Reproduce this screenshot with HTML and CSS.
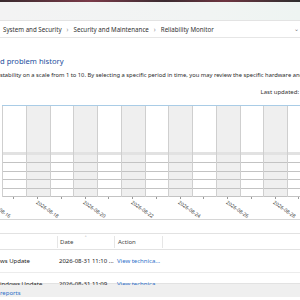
FILE: index.html
```html
<!DOCTYPE html>
<html lang="en">
<head>
  <meta charset="UTF-8" />
  <title>Reliability Monitor</title>
  <link rel="stylesheet" href="styles.css">
</head>
<body>

  <div class="titlebar"></div>
  <div class="toolbar"></div>

  <nav class="crumbs">
    <span>System and Security</span>
    <span class="sep">&#8250;</span>
    <span>Security and Maintenance</span>
    <span class="sep">&#8250;</span>
    <span>Reliability Monitor</span>
    <span class="drop">&#8964;</span>
  </nav>

  <div class="content">
    <h1>d problem history</h1>
    <p class="intro">stability on a scale from 1 to 10. By selecting a specific period in time, you may review the specific hardware and software problems</p>
    <div class="updated">Last updated:</div>

    <div class="chart">
      <div class="col"><div class="graph"></div><div class="band"></div><div class="cell"></div><div class="cell"></div><div class="cell"></div><div class="cell"></div><div class="cell"></div></div>
      <div class="col shade"><div class="graph"></div><div class="band"></div><div class="cell"></div><div class="cell"></div><div class="cell"></div><div class="cell"></div><div class="cell"></div></div>
      <div class="col"><div class="graph"></div><div class="band"></div><div class="cell"></div><div class="cell"></div><div class="cell"></div><div class="cell"></div><div class="cell"></div></div>
      <div class="col shade"><div class="graph"></div><div class="band"></div><div class="cell"></div><div class="cell"></div><div class="cell"></div><div class="cell"></div><div class="cell"></div></div>
      <div class="col"><div class="graph"></div><div class="band"></div><div class="cell"></div><div class="cell"></div><div class="cell"></div><div class="cell"></div><div class="cell"></div></div>
      <div class="col shade"><div class="graph"></div><div class="band"></div><div class="cell"></div><div class="cell"></div><div class="cell"></div><div class="cell"></div><div class="cell"></div></div>
      <div class="col"><div class="graph"></div><div class="band"></div><div class="cell"></div><div class="cell"></div><div class="cell"></div><div class="cell"></div><div class="cell"></div></div>
      <div class="col shade"><div class="graph"></div><div class="band"></div><div class="cell"></div><div class="cell"></div><div class="cell"></div><div class="cell"></div><div class="cell"></div></div>
      <div class="col"><div class="graph"></div><div class="band"></div><div class="cell"></div><div class="cell"></div><div class="cell"></div><div class="cell"></div><div class="cell"></div></div>
      <div class="col shade"><div class="graph"></div><div class="band"></div><div class="cell"></div><div class="cell"></div><div class="cell"></div><div class="cell"></div><div class="cell"></div></div>
      <div class="col"><div class="graph"></div><div class="band"></div><div class="cell"></div><div class="cell"></div><div class="cell"></div><div class="cell"></div><div class="cell"></div></div>
      <div class="col shade"><div class="graph"></div><div class="band"></div><div class="cell"></div><div class="cell"></div><div class="cell"></div><div class="cell"></div><div class="cell"></div></div>
      <div class="col"><div class="graph"></div><div class="band"></div><div class="cell"></div><div class="cell"></div><div class="cell"></div><div class="cell"></div><div class="cell"></div></div>
    </div>

    <div class="axis">
      <div class="tick"><span class="date">2026-08-16</span></div>
      <div class="tick"></div>
      <div class="tick"><span class="date">2026-08-18</span></div>
      <div class="tick"></div>
      <div class="tick"><span class="date">2026-08-20</span></div>
      <div class="tick"></div>
      <div class="tick"><span class="date">2026-08-22</span></div>
      <div class="tick"></div>
      <div class="tick"><span class="date">2026-08-24</span></div>
      <div class="tick"></div>
      <div class="tick"><span class="date">2026-08-26</span></div>
      <div class="tick"></div>
      <div class="tick"><span class="date">2026-08-28</span></div>
      <div class="tick"></div>
    </div>

    <div class="details">
      <div class="row head">
        <div class="c1"></div>
        <div class="c2">Date<span class="sort">&#708;</span></div>
        <div class="c3">Action</div>
        <div class="c4"></div>
      </div>
      <div class="row">
        <div class="c1">ws Update</div>
        <div class="c2">2026-08-31 11:10 ...</div>
        <div class="c3"><a href="#">View technica...</a></div>
        <div class="c4"></div>
      </div>
      <div class="row">
        <div class="c1">indows Update</div>
        <div class="c2">2026-08-31 11:09 ...</div>
        <div class="c3"><a href="#">View technica...</a></div>
        <div class="c4"></div>
      </div>
    </div>
  </div>

  <div class="footer"><a href="#">reports</a></div>

</body>
</html>
```

FILE: styles.css
```css
* { box-sizing: border-box; }
html, body {
  width: 300px;
  height: 300px;
  overflow: hidden;
}
body {
  margin: 0;
  font-family: "Noto Sans", "Open Sans", sans-serif;
  font-size: 6px;
  color: #222;
  background: #fff;
}
a { color: #2a6fc9; text-decoration: none; }

.titlebar {
  height: 2px;
  background: linear-gradient(90deg, #3a2a2e, #7a3a48 30%, #3b2b30 55%, #6d3440 75%, #2e2e2e);
}
.toolbar {
  height: 18px;
  background: linear-gradient(90deg, #f3f3f3, #f1f4f3 70%, #eef4f2);
}
.crumbs {
  height: 18px;
  display: flex;
  align-items: center;
  gap: 4px;
  padding-left: 3px;
  font-size: 6.2px;
  border-top: 1px solid #e3e3e3;
  border-bottom: 1px solid #e6e6e6;
  color: #333;
  white-space: nowrap;
}
.crumbs .sep { color: #888; padding: 0 1px; }
.crumbs .drop { margin-left: auto; margin-right: 1px; color: #777; font-size: 6px; line-height: 4px; }

.content { padding-top: 18px; }
h1 {
  margin: 0;
  font-size: 7.6px;
  line-height: 10px;
  font-weight: 400;
  color: #1d4f9e;
}
.intro {
  margin: 5px 0 0;
  font-size: 5.8px;
  line-height: 8px;
  white-space: nowrap;
  color: #2a2a2a;
}
.updated {
  margin-top: 9px;
  line-height: 8px;
  text-align: right;
  padding-right: 1px;
  color: #333;
}

/* ===== GRAFICO ===== */
.chart {
  display: flex;
  margin-top: 9px;
  margin-left: 2px;
  border-top: 1px solid #a9cce6;
  height: 92px;
}
.col {
  flex: 0 0 23.75px;
  display: flex;
  flex-direction: column;
  border-left: 1px solid #cfcfcf;
}
.col.shade { background: #efefef; }
.graph { height: 46px; }
.band { height: 3px; background: #e2e2e2; }
.cell {
  height: 8.4px;
  border-bottom: 1px solid #c3c3c3;
}

.axis {
  display: flex;
  height: 23px;
  margin-left: -21.75px;
  border-bottom: 1px solid #d6d6d6;
}
.tick {
  flex: 0 0 23.75px;
  min-width: 0;
  background: linear-gradient(#9a9a9a, #9a9a9a) no-repeat center top / 1px 2px;
}
.date {
  display: block;
  width: 0;
  margin: 3px 0 0 11.9px;
  font-size: 5px;
  line-height: 5px;
  color: #444;
  white-space: nowrap;
  transform: rotate(35deg);
  transform-origin: 0 0;
}

/* ===== TABELA ===== */
.details {
  margin-top: 13px;
  border-top: 1px solid #e2e2e2;
  height: 52px;
  overflow: hidden;
}
.row {
  display: flex;
  height: 23px;
  align-items: center;
  border-bottom: 1px solid #ececec;
  white-space: nowrap;
}
.row.head {
  height: 16px;
  border-bottom: 1px solid #e2e2e2;
  color: #444;
}
.c1 { flex: 0 0 57px; }
.c2 { flex: 0 0 57px; padding-left: 2px; position: relative; }
.c3 { flex: 0 0 48px; padding-left: 3px; }
.c4 { flex: 1; }
.head .c2, .head .c3, .head .c4 {
  height: 12px;
  line-height: 12px;
  border-left: 1px solid #e6e6e6;
}
.sort {
  position: absolute;
  left: 27px;
  top: -4px;
  font-size: 5px;
  color: #888;
}

.footer {
  height: 14px;
  margin-top: -2px;
  padding-top: 6px;
  background: #efefef;
  border-top: 1px solid #e2e2e2;
  line-height: 6px;
}
```
